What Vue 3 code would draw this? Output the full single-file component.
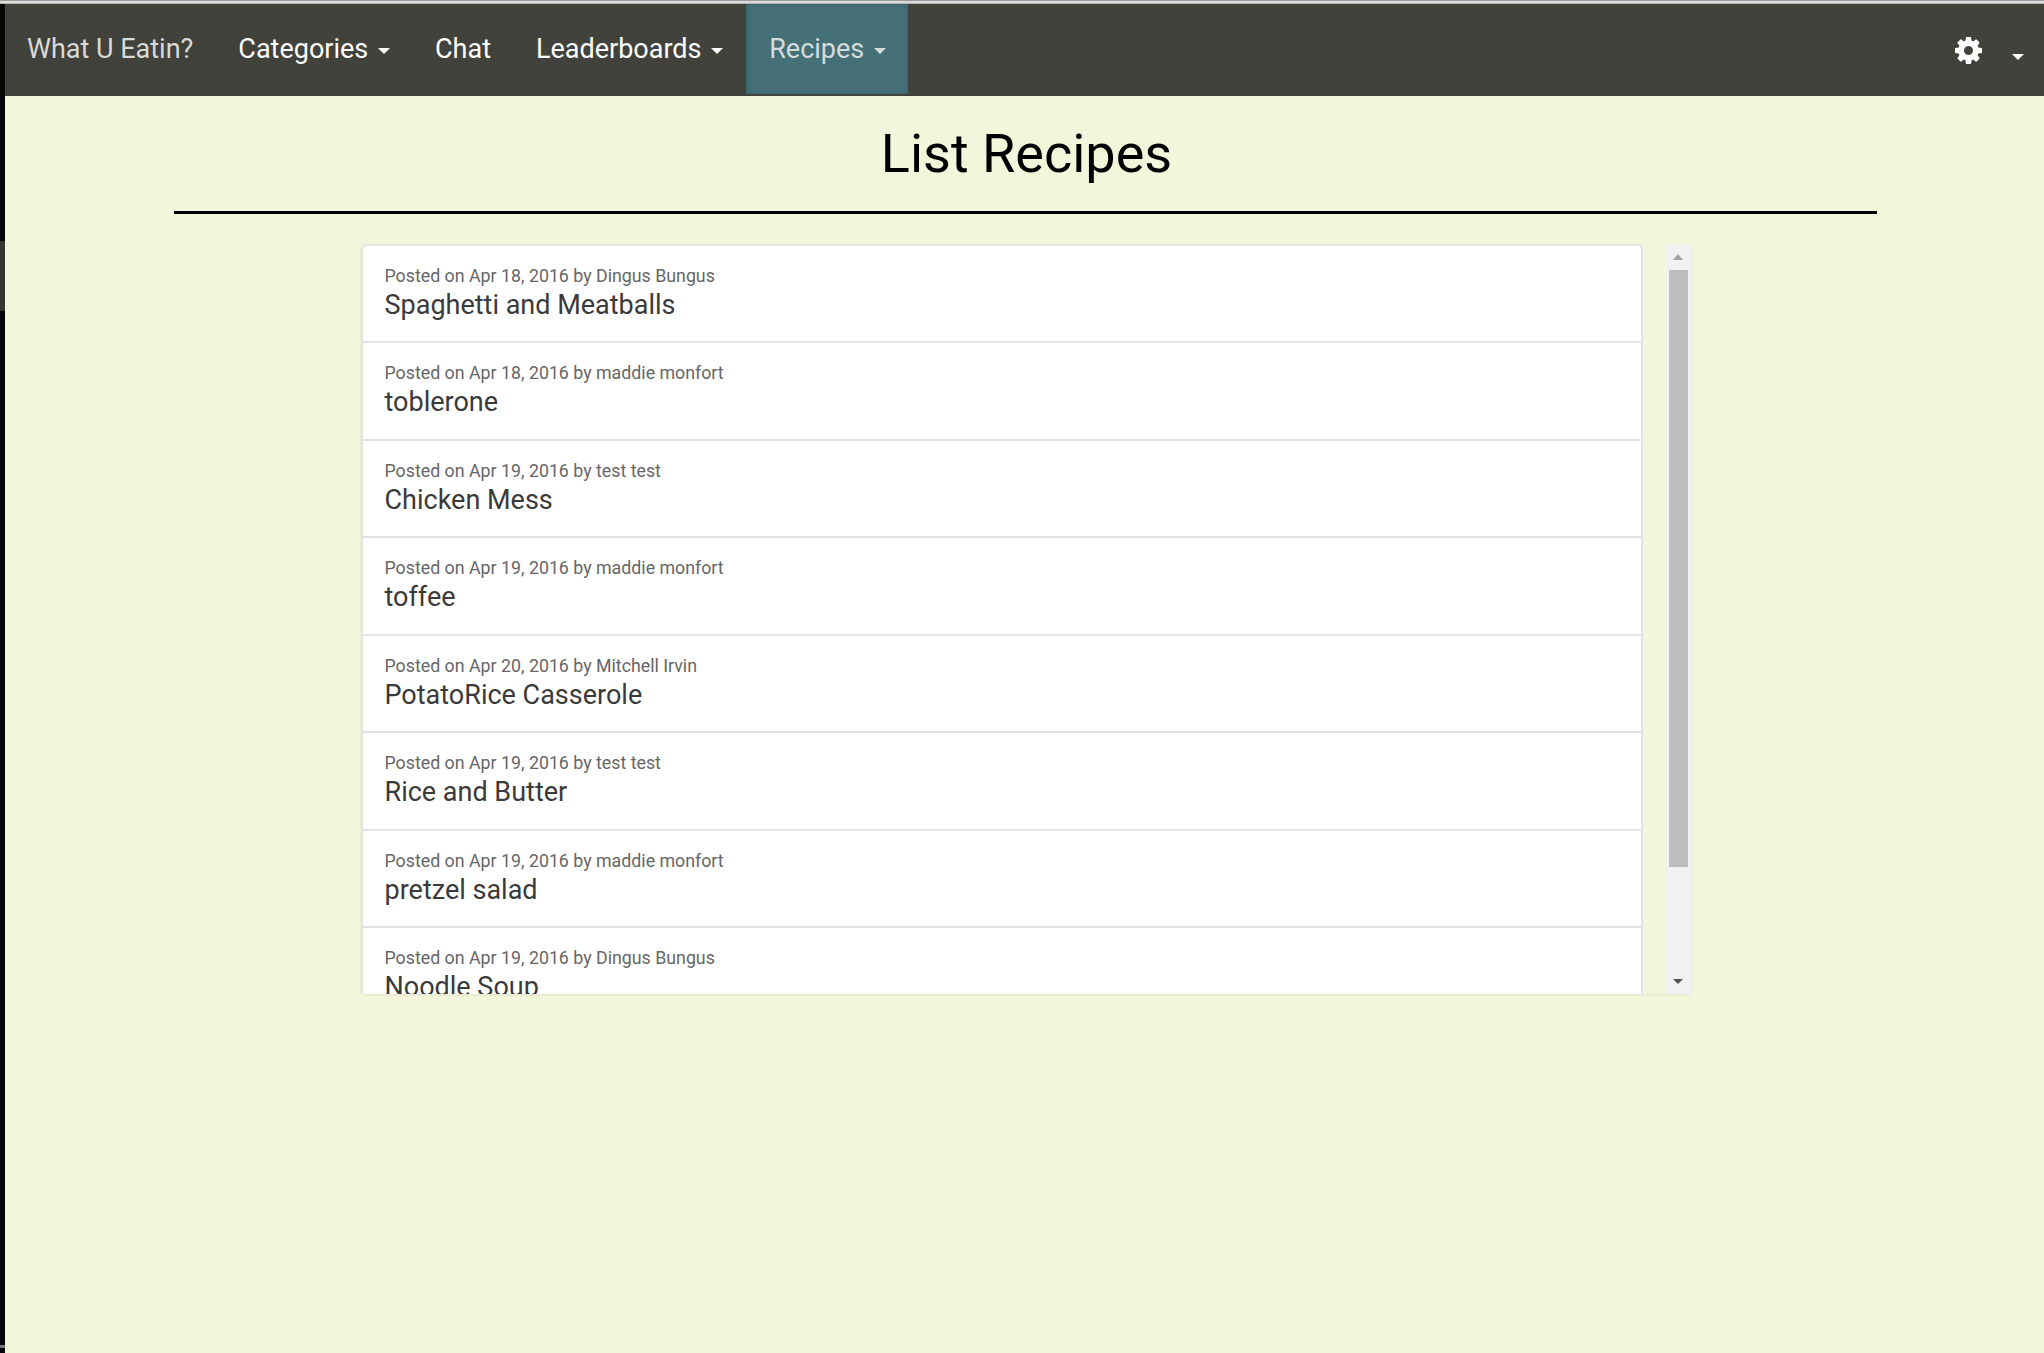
<script setup>
import { ref } from "vue";

const recipes = ref([
  { date: "Apr 18, 2016", by: "Dingus Bungus", name: "Spaghetti and Meatballs" },
  { date: "Apr 18, 2016", by: "maddie monfort", name: "toblerone" },
  { date: "Apr 19, 2016", by: "test test", name: "Chicken Mess" },
  { date: "Apr 19, 2016", by: "maddie monfort", name: "toffee" },
  { date: "Apr 20, 2016", by: "Mitchell Irvin", name: "PotatoRice Casserole" },
  { date: "Apr 19, 2016", by: "test test", name: "Rice and Butter" },
  { date: "Apr 19, 2016", by: "maddie monfort", name: "pretzel salad" },
  { date: "Apr 19, 2016", by: "Dingus Bungus", name: "Noodle Soup" },
]);
</script>

<template>
  <div class="screen">
    <div class="top-edge"></div>
    <div class="body-row">
      <div class="left-edge">
        <div class="edge-black edge-a"></div>
        <div class="edge-gray edge-b"></div>
        <div class="edge-black edge-c"></div>
        <div class="edge-gray edge-d"></div>
        <div class="edge-black edge-e"></div>
      </div>
      <div class="page">
        <nav class="navbar">
          <a class="brand">What U Eatin?</a>
          <a class="nav-link">Categories <span class="caret"></span></a>
          <a class="nav-link chat">Chat</a>
          <a class="nav-link">Leaderboards <span class="caret"></span></a>
          <a class="nav-link active">Recipes <span class="caret"></span></a>
          <div class="nav-right">
            <svg class="gear" viewBox="0 0 1536 1536" width="27" height="27">
              <path fill="#fff" d="M1024 768q0-106-75-181t-181-75-181 75-75 181 75 181 181 75 181-75 75-181zm512-109v222q0 12-8 23t-20 13l-185 28q-19 54-39 91 35 50 107 138 10 12 10 25t-9 23q-27 37-99 108t-94 71q-12 0-26-9l-138-108q-44 23-91 38-16 136-29 186-7 28-36 28h-222q-14 0-24.500-8.500t-11.500-21.500l-28-184q-49-16-90-37l-141 107q-10 9-25 9-14 0-25-11-126-114-165-168-7-10-7-23 0-12 8-23 15-21 51-66.500t54-70.500q-27-50-41-99l-183-27q-13-2-21-12.500t-8-23.500v-222q0-12 8-23t19-13l186-28q14-46 39-92-40-57-107-138-10-12-10-24 0-10 9-23 26-36 98.500-107.500t94.500-71.500q13 0 26 10l138 107q44-23 91-38 16-136 29-186 7-28 36-28h222q14 0 24.500 8.500t11.500 21.500l28 184q49 16 90 37l142-107q9-9 24-9 13 0 25 10 129 119 165 170 7 8 7 22 0 12-8 23-15 21-51 66.500t-54 70.500q26 50 41 98l183 28q13 2 21 12.500t8 23.500z"/>
            </svg>
            <span class="caret settings-caret"></span>
          </div>
        </nav>

        <main class="content">
          <h1 class="title">List Recipes</h1>
          <hr class="rule" />
          <section class="scroller">
            <ul class="recipe-list">
              <li v-for="r in recipes" :key="r.name + r.date" class="recipe">
                <div class="meta">Posted on {{ r.date }} by {{ r.by }}</div>
                <div class="name">{{ r.name }}</div>
              </li>
            </ul>
            <div class="scrollbar">
              <div class="arrow up"></div>
              <div class="thumb"></div>
              <div class="arrow down"></div>
            </div>
          </section>
        </main>
      </div>
    </div>
  </div>
</template>

<style>
html, body {
  margin: 0;
  background: #f4f6db;
}
</style>

<style scoped>
.screen {
  width: 2044px;
  height: 1353px;
  display: flex;
  flex-direction: column;
  overflow: hidden;
  font-family: Roboto, "Liberation Sans", sans-serif;
}
.top-edge {
  height: 4px;
  flex: none;
  background: linear-gradient(#5a5a5a 0, #dcdcdc 1px, #dcdcdc 3px, #8a8a8a 4px);
}
.body-row {
  flex: 1;
  display: flex;
  min-height: 0;
}
.left-edge {
  width: 5px;
  flex: none;
  display: flex;
  flex-direction: column;
}
.edge-black { background: #060604; }
.edge-gray { background: #33352f; }
.edge-a { height: 237px; }
.edge-b { height: 70px; }
.edge-c { flex: 1; }
.edge-d { height: 3px; background: #777; }
.edge-e { height: 5px; }

.page {
  flex: 1;
  min-width: 0;
  background: #f4f6db;
}
.navbar {
  height: 92px;
  display: flex;
  align-items: stretch;
  background: #40423b;
  font-size: 27px;
  color: #fff;
}
.brand,
.nav-link {
  display: flex;
  align-items: center;
  padding: 0 23px 2px;
  white-space: pre;
}
.brand {
  color: #d9d9d6;
  padding: 0 22px 2px;
}
.chat {
  padding-right: 22px;
}
.active {
  height: 90px;
  box-sizing: border-box;
  margin-left: 1px;
  padding-top: 2px;
  padding-bottom: 2px;
  background: #457078;
  color: #d6dcdc;
  box-shadow: inset 0 0 4px rgba(50, 90, 95, 0.8);
}
.caret {
  display: inline-block;
  width: 0;
  height: 0;
  margin: 3px -1px 0 3px;
  border-top: 6px solid currentColor;
  border-left: 6px solid transparent;
  border-right: 6px solid transparent;
}
.nav-right {
  margin-left: auto;
  display: flex;
  align-items: center;
  padding-right: 20px;
}
.settings-caret {
  margin: 14px 0 0 30px;
}

.content {
  display: flex;
  flex-direction: column;
  align-items: center;
}
.title {
  margin: 26px 0 0;
  font-size: 54px;
  line-height: 64px;
  font-weight: 400;
  color: #000;
  text-align: center;
  /* page centre sits a little off the viewport's */
  width: 2039px;
  padding-left: 4px;
}
.rule {
  width: 1703px;
  height: 3px;
  margin: 25px 0 0 2px;
  border: 0;
  background: #000;
}
.scroller {
  width: 1330px;
  height: 750px;
  margin-top: 30px;
  margin-left: 2px;
  display: flex;
  justify-content: space-between;
  box-shadow: 0 1px 3px rgba(0, 0, 0, 0.08);
  border-radius: 4px;
}
.recipe-list {
  width: 1282px;
  box-sizing: border-box;
  margin: 0;
  padding: 0;
  list-style: none;
  background: #fff;
  border: 2px solid #e3e3e3;
  border-bottom: 0;
  border-radius: 6px 6px 0 0;
  overflow: hidden;
}
.recipe {
  height: 97.5px;
  box-sizing: border-box;
  padding: 18px 22px 0;
  border-bottom: 2px solid #e3e3e3;
}
.recipe:first-child {
  height: 97px;
}
.meta {
  font-size: 17.8px;
  line-height: 24px;
  color: #666;
}
.name {
  margin-top: 1px;
  font-size: 27px;
  line-height: 32px;
  color: #3a3a3a;
}
.scrollbar {
  width: 25px;
  display: flex;
  flex-direction: column;
  align-items: center;
  background: #f1f1f1;
  position: relative;
}
.thumb {
  position: absolute;
  top: 26px;
  left: 3px;
  width: 19px;
  height: 597px;
  background: #bdbdbd;
}
.arrow {
  position: absolute;
  left: 7px;
  width: 0;
  height: 0;
  border-left: 5px solid transparent;
  border-right: 5px solid transparent;
}
.arrow.up {
  top: 10px;
  border-bottom: 6px solid #a3a3a3;
}
.arrow.down {
  bottom: 10px;
  border-top: 5px solid #505050;
}
</style>
